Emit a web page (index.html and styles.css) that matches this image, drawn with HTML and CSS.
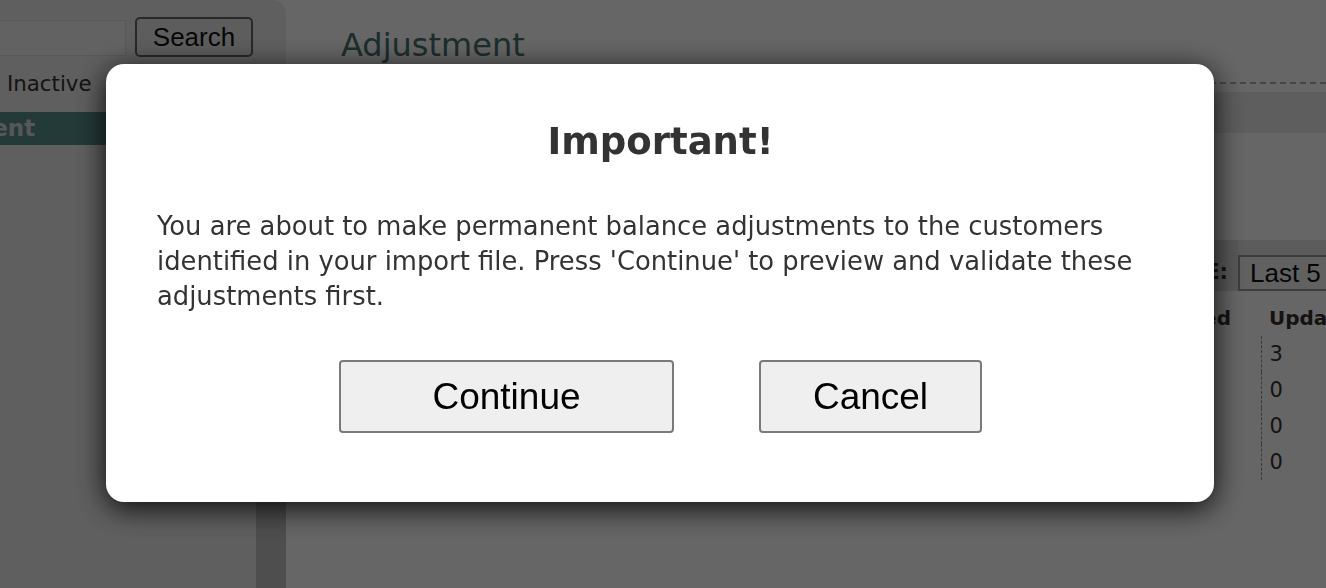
FILE: index.html
```html
<!DOCTYPE html>
<html lang="en">
<head>
<meta charset="utf-8">
<title>Adjustment</title>
<link rel="stylesheet" href="styles.css">
</head>
<body>
<div class="page">
  <aside class="sidebar">
    <div class="search-row">
      <input class="search-input" type="text" aria-label="Search">
      <button class="search-btn" type="button">Search</button>
    </div>
    <div class="status-tabs"><span class="tab">Inactive</span></div>
    <nav class="nav">
      <div class="nav-item active"><span class="nav-label">Adjustment</span></div>
    </nav>
    <div class="side-body">
      <div class="side-list"></div>
      <div class="side-scroll"></div>
    </div>
  </aside>
  <main class="main">
    <header class="main-header"><h1 class="title">Adjustment</h1></header>
    <div class="toolbar"></div>
    <div class="filter-row">
      <div class="filter-label">DATE:</div>
      <div class="filter-select">Last 5 Uploads</div>
    </div>
    <table class="uploads">
      <colgroup>
        <col class="c-file"><col class="c-date"><col class="c-rec"><col class="c-proc"><col class="c-upd"><col class="c-err">
      </colgroup>
      <thead>
        <tr><th></th><th></th><th></th><th class="th-right">Processed</th><th>Updated</th><th>Errors</th></tr>
      </thead>
      <tbody>
        <tr><td></td><td></td><td></td><td></td><td class="td-upd">3</td><td>0</td></tr>
        <tr><td></td><td></td><td></td><td></td><td class="td-upd">0</td><td>0</td></tr>
        <tr><td></td><td></td><td></td><td></td><td class="td-upd">0</td><td>0</td></tr>
        <tr><td></td><td></td><td></td><td></td><td class="td-upd">0</td><td>0</td></tr>
      </tbody>
    </table>
  </main>
</div>

<div class="overlay">
  <div class="dialog" role="dialog" aria-modal="true">
    <h2 class="dialog-title">Important!</h2>
    <p class="dialog-text">You are about to make permanent balance adjustments to the customers identified in your import file. Press 'Continue' to preview and validate these adjustments first.</p>
    <div class="dialog-actions">
      <button class="dlg-btn btn-continue" type="button">Continue</button>
      <button class="dlg-btn btn-cancel" type="button">Cancel</button>
    </div>
  </div>
</div>
</body>
</html>
```

FILE: styles.css
```css
html, body {
  margin: 0;
  padding: 0;
  height: 100%;
  overflow: hidden;
}

body {
  background: #ffffff;
  font-family: "DejaVu Sans", Verdana, sans-serif;
  color: #333333;
}

.page {
  display: flex;
  height: 100vh;
}

/* ---------- sidebar ---------- */
.sidebar {
  flex: 0 0 286px;
  display: flex;
  flex-direction: column;
  background: #eeeeee;
  border-top-right-radius: 14px;
  overflow: hidden;
}

.search-row {
  display: flex;
  align-items: flex-start;
  gap: 9px;
  padding-top: 17px;
}

.search-input {
  box-sizing: border-box;
  width: 126px;
  height: 36px;
  margin: 3px 0 0;
  border: 1px solid #dcdcdc;
  border-left: 0;
  background: #f6f6f6;
}

.search-btn {
  box-sizing: border-box;
  width: 118px;
  height: 40px;
  padding: 0;
  border: 2px solid #666666;
  border-radius: 5px;
  background: #e9e9e9;
  font-family: "Liberation Sans", Arial, sans-serif;
  font-size: 26px;
  color: #111111;
}

.status-tabs {
  margin-top: 14px;
  padding-left: 7px;
  font-size: 21.3px;
  line-height: 1.2;
  color: #333333;
}

.nav {
  margin-top: 15px;
}

.nav-item {
  height: 33px;
  line-height: 33px;
  font-size: 23px;
  font-weight: bold;
  white-space: nowrap;
  overflow: hidden;
}

.nav-item.active {
  background: #58918c;
  color: #dadada;
}

.nav-label {
  display: inline-block;
  margin-left: -115px;
}

.side-body {
  flex: 1;
  display: flex;
  margin-top: 12px;
}

.side-list {
  flex: 1;
}

.side-scroll {
  flex: 0 0 30px;
  background: #c2c2c2;
}

/* ---------- main ---------- */
.main {
  flex: 1;
  min-width: 0;
  overflow: hidden;
  background: #ffffff;
}

.main-header {
  margin-left: 55px;
  padding: 27px 0 18px;
  border-bottom: 2px dashed #b0b0b0;
}

.title {
  margin: 0;
  font-size: 32px;
  font-weight: normal;
  line-height: 1.164;
  color: #46736e;
}

.toolbar {
  height: 41px;
  margin-top: 8px;
  background: #ebebeb;
}

.filter-row {
  display: flex;
  align-items: flex-end;
  height: 51px;
  margin-top: 107px;
  padding-left: 55px;
  background: #e6e6e6;
  white-space: nowrap;
}

.filter-label {
  box-sizing: border-box;
  flex: 0 0 897px;
  align-self: stretch;
  display: flex;
  align-items: center;
  justify-content: flex-end;
  padding: 12px 10px 0 0;
  font-size: 21px;
  font-weight: bold;
  color: #333333;
  background: #dedede;
}

.filter-select {
  box-sizing: border-box;
  flex: 0 0 auto;
  height: 36px;
  padding: 0 30px 0 10px;
  border: 2px solid #9a9a9a;
  background: #f2f2f2;
  font-family: "Liberation Sans", Arial, sans-serif;
  font-size: 26px;
  line-height: 32px;
  color: #111111;
}

.uploads {
  margin: 9px 0 0 55px;
  border-collapse: collapse;
  table-layout: fixed;
  width: 1220px;
  font-size: 21px;
  color: #333333;
}

.c-file { width: 380px; }
.c-date { width: 220px; }
.c-rec  { width: 150px; }
.c-proc { width: 170px; }
.c-upd  { width: 150px; }
.c-err  { width: 150px; }

.uploads th,
.uploads td {
  height: 36px;
  padding: 0 0 0 8px;
  text-align: left;
  white-space: nowrap;
  overflow: hidden;
  line-height: 36px;
}

.uploads th {
  font-weight: bold;
  font-size: 20px;
  color: #3a2f2f;
}

.uploads th.th-right {
  text-align: right;
  padding: 0 30px 0 0;
}

.uploads td.td-upd {
  border-left: 1px dashed #8c8c8c;
}

/* ---------- modal ---------- */
.overlay {
  position: fixed;
  inset: 0;
  background: rgba(0, 0, 0, 0.6);
}

.dialog {
  box-sizing: border-box;
  width: 1108px;
  margin: 64px 0 0 106px;
  padding: 56px 50px 69px 51px;
  background: #ffffff;
  border-radius: 18px;
  box-shadow: 0 6px 30px rgba(0, 0, 0, 0.9);
  color: #333333;
}

.dialog-title {
  margin: 0;
  text-align: center;
  font-size: 37px;
  font-weight: bold;
  line-height: 1.164;
}

.dialog-text {
  margin: 46px 0 0;
  font-size: 25.8px;
  line-height: 35px;
}

.dialog-actions {
  display: flex;
  justify-content: center;
  gap: 85px;
  margin-top: 46px;
}

.dlg-btn {
  box-sizing: border-box;
  height: 73px;
  padding: 0;
  border: 2px solid #7a7a7a;
  border-radius: 4px;
  background: #efefef;
  font-family: "Liberation Sans", Arial, sans-serif;
  font-size: 37px;
  color: #000000;
}

.btn-continue { width: 335px; }
.btn-cancel { width: 223px; }
```
